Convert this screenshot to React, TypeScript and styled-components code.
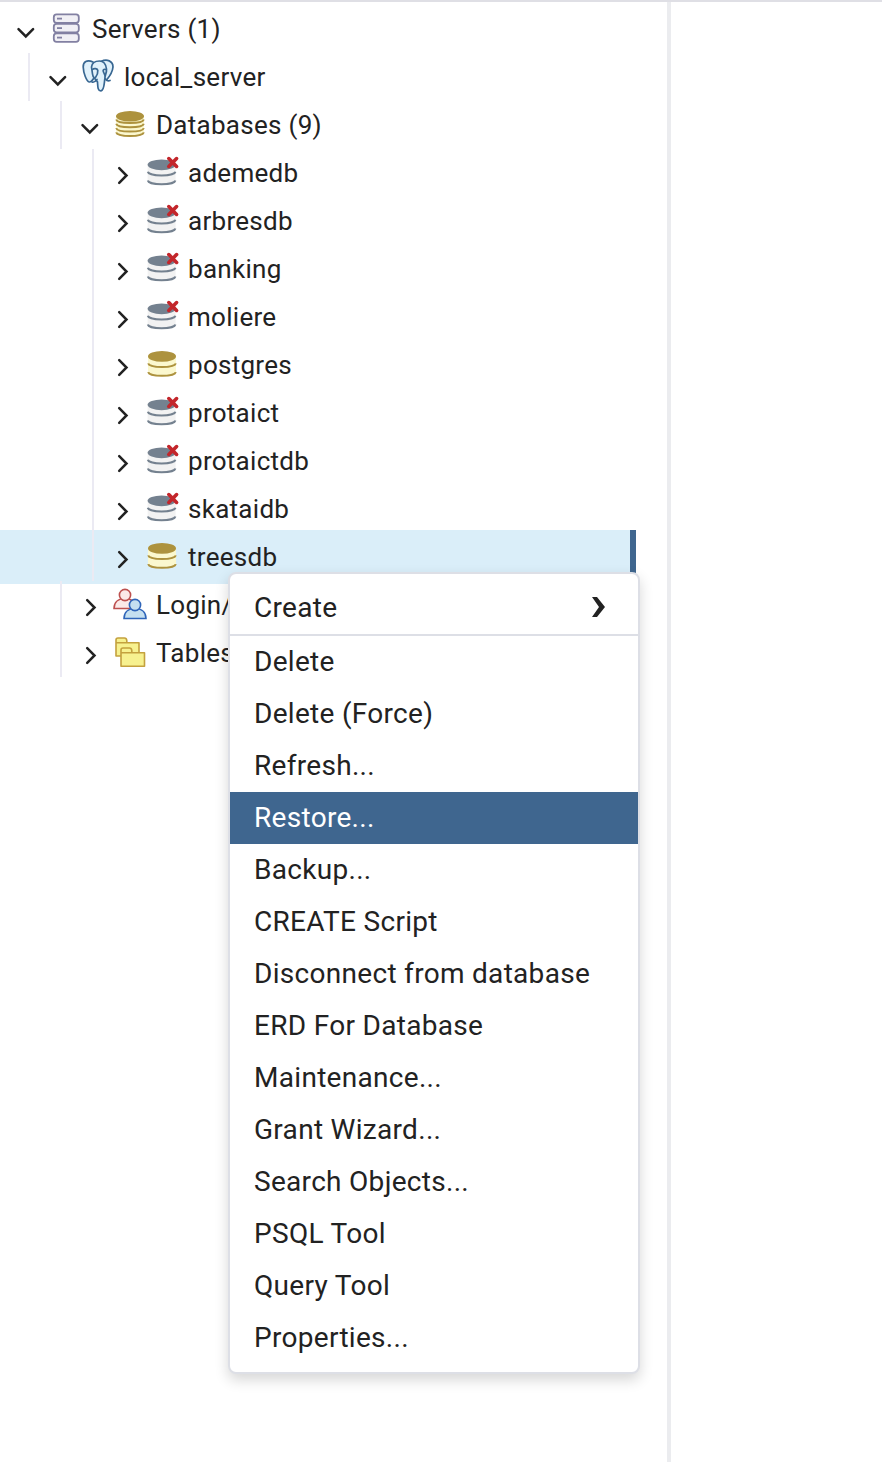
import React from "react";
import styled, { createGlobalStyle } from "styled-components";

const Global = createGlobalStyle`
  * { box-sizing: border-box; }
  body { margin: 0; background: #fff; }
`;

const Page = styled.div`
  position: relative;
  display: flex;
  width: 882px;
  height: 1462px;
  overflow: hidden;
  border-top: 2px solid #dfdfe5;
  background: #fff;
  color: #222;
  font-family: Roboto, sans-serif;
`;

const TreePanel = styled.div`
  width: 671px;
  padding-top: 3px;
  border-right: 4px solid #ebecef;
`;

const Row = styled.div<{ $selected?: boolean }>`
  display: flex;
  align-items: center;
  width: 636px;
  height: ${(p) => (p.$selected ? 54 : 48)}px;
  margin: ${(p) => (p.$selected ? "-3px 0" : "0")};
  background: ${(p) => (p.$selected ? "#daeef9" : "transparent")};
  border-right: ${(p) => (p.$selected ? "6px solid #3f668f" : "0")};
`;

const Guide = styled.span<{ $level: number }>`
  flex: none;
  width: ${(p) => (p.$level ? p.$level * 32 - 2 : 0)}px;
  height: 48px;
  margin-right: ${(p) => (p.$level ? 2 : 0)}px;
  border-right: ${(p) => (p.$level ? "2px solid #ebeaf3" : "0")};
`;

const Chevron = styled.svg`
  flex: none;
  width: 20px;
  height: 48px;
  margin: 0 12px 0 16px;
  fill: none;
  stroke: #222;
  stroke-width: 2.5;
  stroke-linecap: round;
`;

const Icon = styled.svg`
  flex: none;
  width: 36px;
  height: 48px;
  margin-right: 8px;
`;

const Label = styled.span`
  font-size: 26px;
  line-height: 48px;
  letter-spacing: 0.28px;
  white-space: nowrap;
`;

const Menu = styled.div`
  position: absolute;
  left: 228px;
  top: 570px;
  width: 412px;
  padding: 8px 0;
  border: 2px solid #dddfe6;
  border-radius: 8px;
  background: #fff;
  box-shadow: 0 6px 14px rgba(0, 0, 0, 0.16);
`;

const MenuItem = styled.div<{ $active?: boolean }>`
  display: flex;
  align-items: center;
  justify-content: space-between;
  height: 52px;
  padding: 0 32px 2px 24px;
  font-size: 28px;
  letter-spacing: 0.3px;
  white-space: nowrap;
  color: ${(p) => (p.$active ? "#fff" : "#222")};
  background: ${(p) => (p.$active ? "#3f668f" : "transparent")};
`;

const Separator = styled.div`
  height: 2px;
  background: #dddfe6;
`;

const Arrow = styled.svg`
  width: 14px;
  height: 20px;
`;

type Kind = "servers" | "elephant" | "databases" | "db" | "off" | "roles" | "spaces";

const ServerIcon = () => (
  <g fill="#f1f0f5" stroke="#8280a2" strokeWidth="1.8">
    {[9.4, 18.9, 28.4].map((y) => (
      <g key={y}>
        <rect x="5.800" y={y} width="25" height="8.400" rx="2.800" />
        <path d={`M9 ${y + 4.2}h5`} />
      </g>
    ))}
  </g>
);

const ElephantIcon = () => (
  <g fill="#e0f1fb" stroke="#386792" strokeWidth="1.7" strokeLinejoin="round" strokeLinecap="round">
    <path d="M13 9C7 6 3 9 3.2 14C3.4 20 6.5 28.5 9.2 29C11 29.3 13 26.5 14 25" />
    <path d="M21 8.5C27 5.5 33 8 33 14C32.500 20 29.500 23.500 26.500 27" />
    <path d="M11.500 14C12 9.500 16 8 19.500 8C24 8 26 12 26.500 16C27 20 24.500 22.500 25 25C24 30 24.500 37.500 21 37.800C17.500 38 17.800 33 17.500 29C16 26 12.500 25 12.500 21Z" />
    <path fill="none" d="M12.500 16.500C14 15 17.500 15.500 17.800 17.500C18 20 17.500 22 15.500 24.500M17 26.500C15 29 13 29.500 12 29M26 16.500C23.500 15.800 22.500 17 23.500 19L25 22.500M25.500 26C27 28 29 28 30 27.500" />
  </g>
);

const DatabasesIcon = () => (
  <g>
    <path fill="#fbf8cf" d="M4 14v17c0 6 28 6 28 0V14z" />
    <path
      fill="none"
      stroke="#ad923e"
      strokeWidth="2"
      d="M4.200 18.500c1 4.600 26.600 4.600 27.600 0M4.200 22.800c1 4.600 26.600 4.600 27.600 0M4.200 27.100c1 4.600 26.600 4.600 27.600 0M4.200 31.400c1 4.900 26.600 4.900 27.600 0"
    />
    <ellipse cx="18" cy="15.300" rx="14" ry="5.200" fill="#ad923e" />
  </g>
);

const DbIcon = ({ off }: { off?: boolean }) => {
  const edge = off ? "#74818f" : "#ad923e";
  return (
    <g transform={off ? "translate(-.4 .4)" : undefined}>
      <path fill={off ? "#f2f2f2" : "#fbf8cf"} d="M4 14v17c0 5.600 28 5.600 28 0V14z" />
      <path
        fill="none"
        stroke={edge}
        strokeWidth="2"
        d="M4.200 22.400c1 4.900 26.600 4.900 27.600 0M4.200 31.100c1 5 26.600 5 27.600 0"
      />
      <ellipse cx="18" cy="15.400" rx="14" ry="5.400" fill={edge} />
      {off && (
        <path
          fill="none"
          stroke="#c3262b"
          strokeWidth="3.600"
          strokeLinecap="round"
          d="M25.200 9.200l7.800 7.800M33 9.200l-7.800 7.800"
        />
      )}
    </g>
  );
};

const RolesIcon = () => (
  <g strokeWidth="1.6">
    <g fill="#fbe9e8" stroke="#bd504f">
      <path d="M2 27.500c0-6 4-10 11-10s10 4 10 10z" />
      <circle cx="13" cy="14" r="5.600" />
    </g>
    <g fill="#c5e0f0" stroke="#2f65b9">
      <path d="M12 37.500c0-6 4-10 11-10s11 4 11 10z" />
      <circle cx="23" cy="24" r="5.600" />
    </g>
  </g>
);

const SpacesIcon = () => (
  <g fill="#f7f18f" stroke="#c4a13e" strokeWidth="1.600" strokeLinejoin="round">
    <path d="M4 27V11q0-2 2-2h6.500q2 0 2.300 2.500v2.300H27V27zM4 13.800h11" />
    <path d="M9 37.300V21q0-2 2-2h6.500q2 0 2.300 2.500v2.300h12.700v13.500zM9 23.800h11" />
  </g>
);

const icons: Record<Kind, React.ReactNode> = {
  servers: <ServerIcon />,
  elephant: <ElephantIcon />,
  databases: <DatabasesIcon />,
  db: <DbIcon />,
  off: <DbIcon off />,
  roles: <RolesIcon />,
  spaces: <SpacesIcon />,
};

interface Node {
  level: number;
  label: string;
  kind: Kind;
  open?: boolean;
  selected?: boolean;
}

const nodes: Node[] = [
  { level: 0, label: "Servers (1)", kind: "servers", open: true },
  { level: 1, label: "local_server", kind: "elephant", open: true },
  { level: 2, label: "Databases (9)", kind: "databases", open: true },
  { level: 3, label: "ademedb", kind: "off" },
  { level: 3, label: "arbresdb", kind: "off" },
  { level: 3, label: "banking", kind: "off" },
  { level: 3, label: "moliere", kind: "off" },
  { level: 3, label: "postgres", kind: "db" },
  { level: 3, label: "protaict", kind: "off" },
  { level: 3, label: "protaictdb", kind: "off" },
  { level: 3, label: "skataidb", kind: "off" },
  { level: 3, label: "treesdb", kind: "db", selected: true },
  { level: 2, label: "Login/", kind: "roles" },
  { level: 2, label: "Tables", kind: "spaces" },
];

const actions = [
  "Delete",
  "Delete (Force)",
  "Refresh...",
  "Restore...",
  "Backup...",
  "CREATE Script",
  "Disconnect from database",
  "ERD For Database",
  "Maintenance...",
  "Grant Wizard...",
  "Search Objects...",
  "PSQL Tool",
  "Query Tool",
  "Properties...",
];

export default function App() {
  return (
    <>
      <Global />
      <Page>
        <TreePanel>
          {nodes.map((n) => (
            <Row key={n.label} $selected={n.selected}>
              <Guide $level={n.level} />
              <Chevron viewBox="0 0 20 48">
                <path d={n.open ? "M2.500 24.200l7.300 7.300 7.300-7.300" : "M7.200 19.200l7.300 7.300-7.300 7.300"} />
              </Chevron>
              <Icon viewBox="0 0 36 48">{icons[n.kind]}</Icon>
              <Label>{n.label}</Label>
            </Row>
          ))}
        </TreePanel>
        <Menu>
          <MenuItem>
            Create
            <Arrow viewBox="0 0 14 20">
              <path fill="#222" d="M0 0h5l8 10-8 10H0l7-10z" />
            </Arrow>
          </MenuItem>
          <Separator />
          {actions.map((a) => (
            <MenuItem key={a} $active={a === "Restore..."}>
              {a}
            </MenuItem>
          ))}
        </Menu>
      </Page>
    </>
  );
}
